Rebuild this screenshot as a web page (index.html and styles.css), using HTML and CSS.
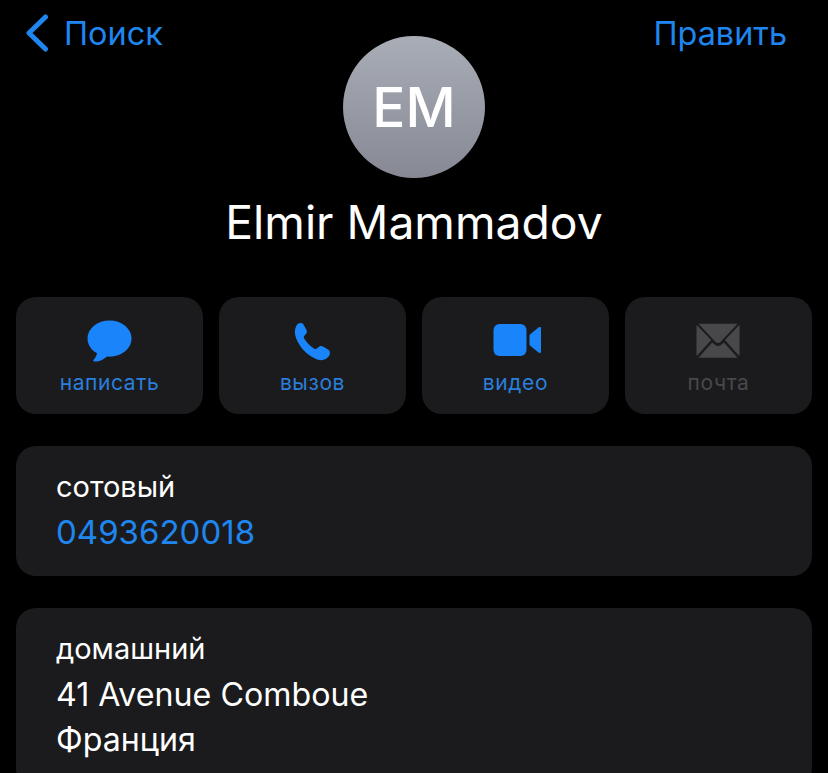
FILE: index.html
```html
<!DOCTYPE html>
<html lang="ru">
<head>
  <meta charset="UTF-8">
  <meta name="viewport" content="width=device-width, initial-scale=1.0">
  <title>Контакт</title>
  <link rel="stylesheet" href="styles.css">
</head>
<body>
  <div id="container">
    <div class="nav">
      <div class="nav-back">
        <svg class="chevron" width="24" height="38" viewBox="0 0 24 38">
          <path d="M20.500 3 L4 19 L20.500 35" fill="none" stroke="#1f86f0" stroke-width="5" stroke-linecap="round" stroke-linejoin="round"/>
        </svg>
        <span>Поиск</span>
      </div>
      <div class="nav-edit">Править</div>
    </div>

    <div class="avatar">EM</div>
    <h1 class="name">Elmir Mammadov</h1>

    <div class="actions">
      <div class="action">
        <svg class="action-icon" width="46" height="42" viewBox="0 0 47 42">
          <ellipse cx="23" cy="18.500" rx="22.500" ry="18.500" fill="#1a84fb"/>
          <path d="M11 29 C11 34 9 38 6.500 40.500 C6 41.500 7 42 8 42 C13 42 18 39.500 21 36 Z" fill="#1a84fb"/>
        </svg>
        <span>написать</span>
      </div>
      <div class="action">
        <svg class="action-icon" width="46" height="42" viewBox="3 0 46 42">
          <path d="M9 6.500 C10.500 2.500 15 2 16.500 4.500 L19.500 10 C20.500 12 19.500 13.500 18 15 C16.500 16.500 16.500 17.500 17.500 19 C20 23 23 26 27 28.500 C28.500 29.500 29.500 29 31 27.500 C32.500 26 34 25.500 36 26.500 L41 29.500 C44 31.500 43.500 35.500 40 38 C37 40.500 33 41 28 38.500 C19 34 12.500 27 9 18 C7.500 13.500 7.500 10 9 6.500 Z" fill="#1a84fb"/>
        </svg>
        <span>вызов</span>
      </div>
      <div class="action">
        <svg class="action-icon" width="50" height="42" viewBox="-1.500 1 50 42">
          <rect x="1" y="5" width="33" height="32" rx="6" fill="#1a84fb"/>
          <path d="M37 17 C37 16 37.500 15.500 38 15 L46 8.500 C47.500 7.500 49 8 49 10 V32 C49 34 47.500 34.500 46 33.500 L38 27 C37.500 26.500 37 26 37 25 Z" fill="#1a84fb"/>
        </svg>
        <span>видео</span>
      </div>
      <div class="action action-off">
        <svg class="action-icon" width="46" height="42" viewBox="0.500 0 47 42">
          <path d="M1.500 5 L16 20 L1.500 36 C1.200 36 1 35.500 1 35 V6 C1 5.500 1.200 5.200 1.500 5 Z" fill="#48484a"/>
          <path d="M44.500 5 L30 20 L44.500 36 C44.800 36 45 35.500 45 35 V6 C45 5.500 44.800 5.200 44.500 5 Z" fill="#48484a"/>
          <path d="M3 3.500 H43 L25.500 22 C24 23.500 22 23.500 20.500 22 Z" fill="#48484a"/>
          <path d="M3 38 L17 22.500 L20 25 C22 26.500 24 26.500 26 25 L29 22.500 L43 38 Z" fill="#48484a"/>
        </svg>
        <span>почта</span>
      </div>
    </div>

    <div class="card card-phone">
      <div class="card-label">сотовый</div>
      <div class="card-value card-link">0493620018</div>
    </div>

    <div class="card card-address">
      <div class="card-label">домашний</div>
      <div class="card-value">41 Avenue Comboue</div>
      <div class="card-value">Франция</div>
    </div>
  </div>
</body>
</html>
```

FILE: styles.css
```css
html, body {
  height: 100%;
}

body {
  background-color: #000;
  color: #fff;
  font-family: Inter, "Noto Sans", sans-serif;
  margin: 0;
  overflow: hidden;
}

#container {
  display: flex;
  flex-direction: column;
  padding: 0 16px;
}

.nav {
  display: flex;
  justify-content: space-between;
  align-items: center;
  height: 66px;
  padding: 0 25px 0 9px;
  color: #1f86f0;
  font-size: 32.4px;
}

.nav-back {
  display: flex;
  align-items: center;
  gap: 15px;
}

.avatar {
  align-self: center;
  width: 142px;
  height: 142px;
  margin-top: -30px;
  border-radius: 50%;
  background: linear-gradient(#a9adb6, #868994);
  display: flex;
  justify-content: center;
  align-items: center;
  font-size: 55px;
  font-weight: 500;
}

.name {
  margin: 19px 0 0;
  height: 58px;
  text-align: center;
  font-size: 46.3px;
  line-height: 50px;
  font-weight: 400;
}

.actions {
  display: grid;
  grid-template-columns: repeat(4, 1fr);
  gap: 16px;
  margin-top: 42px;
}

.action {
  height: 117px;
  background-color: #1b1b1d;
  border-radius: 20px;
  display: flex;
  flex-direction: column;
  align-items: center;
  padding-top: 23px;
  box-sizing: border-box;
  color: #2a7fdc;
  font-size: 21px;
  letter-spacing: 0.6px;
}

.action-icon {
  margin-bottom: 8px;
}

.action-off {
  color: #48484a;
}

.card {
  background-color: #1b1b1d;
  border-radius: 20px;
  padding: 23px 40px 0;
  box-sizing: border-box;
}

.card-phone {
  height: 130px;
  margin-top: 32px;
}

.card-address {
  height: 180px;
  margin-top: 32px;
}

.card-label {
  font-size: 29px;
  line-height: 36px;
}

.card-value {
  font-size: 32.2px;
  line-height: 45px;
  margin-top: 5px;
}

.card-value + .card-value {
  margin-top: 0;
}

.card-link {
  color: #1f86f0;
  font-size: 33px;
}
```
